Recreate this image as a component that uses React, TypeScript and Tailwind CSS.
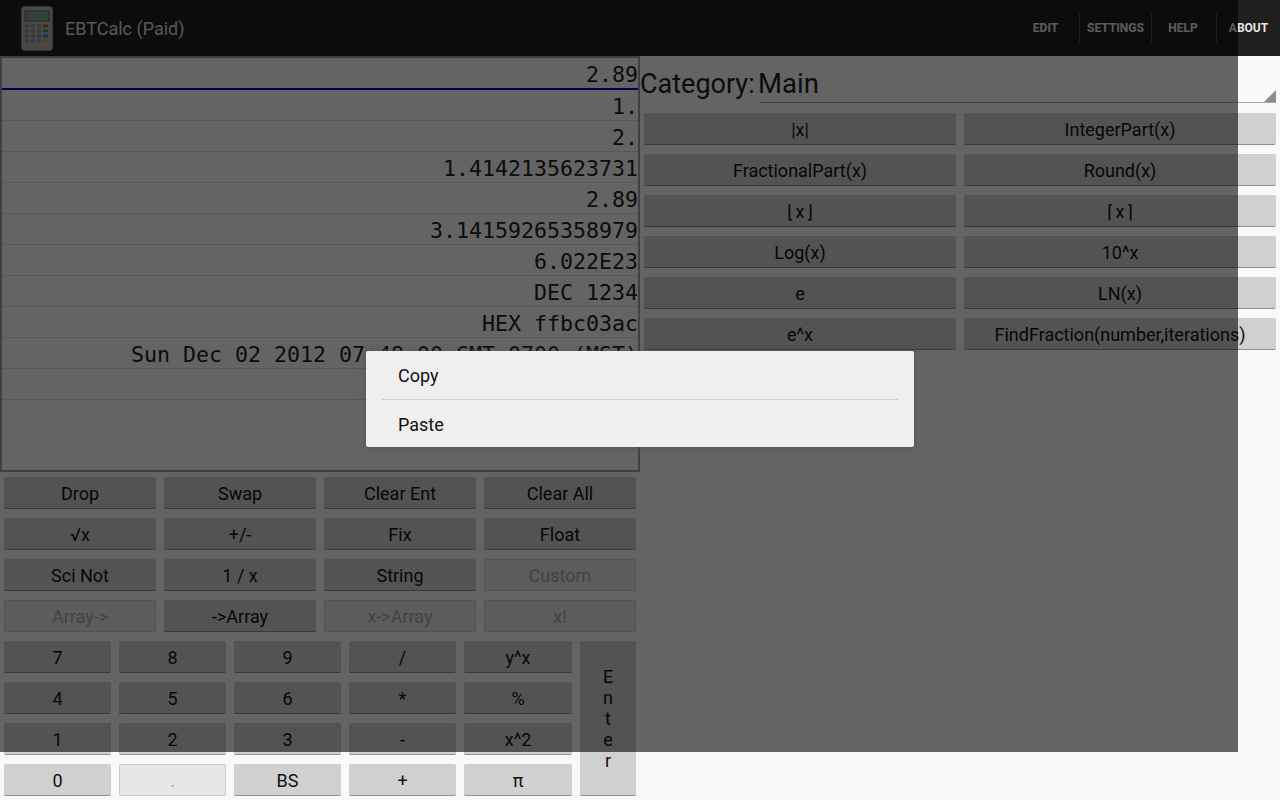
const stackRows = [
  "2.89",
  "1.",
  "2.",
  "1.4142135623731",
  "2.89",
  "3.14159265358979",
  "6.022E23",
  "DEC 1234",
  "HEX ffbc03ac",
  "Sun Dec 02 2012 07:48:00 GMT-0700 (MST)",
  "",
];

const opRows = [
  [
    { label: "Drop" },
    { label: "Swap" },
    { label: "Clear Ent" },
    { label: "Clear All" },
  ],
  [{ label: "√x" }, { label: "+/-" }, { label: "Fix" }, { label: "Float" }],
  [
    { label: "Sci Not" },
    { label: "1 / x" },
    { label: "String" },
    { label: "Custom", disabled: true },
  ],
  [
    { label: "Array->", disabled: true },
    { label: "->Array" },
    { label: "x->Array", disabled: true },
    { label: "x!", disabled: true },
  ],
];

const numRows = [
  [{ label: "7" }, { label: "8" }, { label: "9" }, { label: "/" }, { label: "y^x" }],
  [{ label: "4" }, { label: "5" }, { label: "6" }, { label: "*" }, { label: "%" }],
  [{ label: "1" }, { label: "2" }, { label: "3" }, { label: "-" }, { label: "x^2" }],
  [
    { label: "0" },
    { label: ".", disabled: true },
    { label: "BS" },
    { label: "+" },
    { label: "π" },
  ],
];

const funcRows = [
  ["|x|", "IntegerPart(x)"],
  ["FractionalPart(x)", "Round(x)"],
  ["⌊\u200ax\u200a⌋", "⌈\u200ax\u200a⌉"],
  ["Log(x)", "10^x"],
  ["e", "LN(x)"],
  ["e^x", "FindFraction(number,iterations)"],
];

function Key({
  label,
  disabled,
  className = "",
}: {
  label: string;
  disabled?: boolean;
  className?: string;
}) {
  return (
    <div
      className={
        "flex h-[32px] items-center justify-center rounded-[2px] pt-[1px] text-[18px] " +
        (disabled
          ? "border border-[#cccccc] bg-[#e6e6e6] text-[#a8a8a8] "
          : "border-b border-[#8f8f8f] bg-[#d0d0d0] text-[#111111] ") +
        className
      }
    >
      {label}
    </div>
  );
}

function CalcIcon() {
  return (
    <svg width="32" height="46" viewBox="0 0 32 46">
      <rect x="0.5" y="0.5" width="31" height="44" rx="3" fill="#b4b4b4" stroke="#8a8a8a" />
      <rect x="4" y="5" width="24" height="10" fill="#7fa58f" stroke="#55655c" />
      {[20, 25, 30, 35].map((y, i) => (
        <g key={y}>
          {[6, 12, 18].map((x) => (
            <circle key={x} cx={x} cy={y} r="1.7" fill="#9a9a9a" stroke="#777777" strokeWidth="0.6" />
          ))}
          <rect
            x="22"
            y={y - 1.5}
            width="5"
            height="3"
            rx="1"
            fill={["#d83a3a", "#2ea83a", "#3a78d8", "#e0a020"][i]}
          />
        </g>
      ))}
    </svg>
  );
}

export default function App() {
  return (
    <div className="relative h-[800px] w-[1280px] overflow-hidden bg-[#f9f9f9] font-['Roboto',sans-serif]">
      {/* action bar */}
      <div className="flex h-14 items-center bg-[#1f1f1f]">
        <div className="ml-[21px] mr-[12px] mt-[1px]">
          <CalcIcon />
        </div>
        <span className="text-[18px] text-[#dcdcdc]">EBTCalc (Paid)</span>
        <div className="ml-auto flex h-8 items-center text-[12px] font-bold text-[#e6e6e6]">
          <span className="flex h-8 w-[68px] items-center justify-center pl-[1px]">EDIT</span>
          <span className="flex h-8 w-[72px] items-center justify-center border-l border-[#444444]">
            SETTINGS
          </span>
          <span className="flex h-8 w-[65px] items-center justify-center border-l border-[#444444] pr-[2px]">
            HELP
          </span>
          <span className="flex h-8 w-[64px] items-center justify-center border-l border-[#444444]">
            ABOUT
          </span>
        </div>
      </div>

      <div className="flex">
        {/* left column */}
        <div className="w-[640px]">
          <div className="h-[416px] overflow-hidden border-2 border-[#a0a0a0]">
            {stackRows.map((row, i) => (
              <div
                key={i}
                className={
                  "flex items-center justify-end whitespace-nowrap pt-[5px] font-['DejaVu_Sans_Mono',monospace] text-[21.6px] text-[#222222] " +
                  (i === 0 ? "h-[32px] border-b-2 border-[#0000c0]" : "h-[31px] border-b border-[#dadada]")
                }
              >
                {row}
              </div>
            ))}
          </div>

          <div className="flex flex-col gap-[9px] px-1 pt-[5px]">
            {opRows.map((row, i) => (
              <div key={i} className="grid grid-cols-4 gap-2">
                {row.map((k) => (
                  <Key key={k.label} label={k.label} disabled={k.disabled} />
                ))}
              </div>
            ))}

            <div className="flex gap-2">
              <div className="flex w-[568px] flex-col gap-[9px]">
                {numRows.map((row, i) => (
                  <div key={i} className="grid grid-cols-[107px_107px_107px_107px_108px] gap-2">
                    {row.map((k) => (
                      <Key key={k.label} label={k.label} disabled={k.disabled} />
                    ))}
                  </div>
                ))}
              </div>
              <div className="flex h-[155px] w-14 flex-col items-center justify-center rounded-[2px] border-b border-[#8f8f8f] bg-[#d0d0d0] text-[18px] leading-[21px] text-[#111111]">
                <span>E</span>
                <span>n</span>
                <span>t</span>
                <span>e</span>
                <span>r</span>
              </div>
            </div>
          </div>
        </div>

        {/* right column */}
        <div className="w-[640px]">
          <div className="flex h-[48px] items-start">
            <span className="mt-[10px] w-[119px] text-[27px] leading-[36px] text-[#222222]">Category:</span>
            <div className="relative mt-[10px] h-[37px] w-[517px] border-b border-[#a8a8a8] text-[27.5px] leading-[36px] text-[#222222]">
              <span className="-ml-[1px]">Main</span>
              <div className="absolute bottom-0 right-0 h-0 w-0 border-b-[12px] border-l-[12px] border-b-[#8c8c8c] border-l-transparent" />
            </div>
          </div>
          <div className="flex flex-col gap-[9px] px-1 pt-[9px]">
            {funcRows.map((row, i) => (
              <div key={i} className="grid grid-cols-2 gap-2">
                {row.map((label) => (
                  <Key key={label} label={label} />
                ))}
              </div>
            ))}
          </div>
        </div>
      </div>

      {/* dim layer */}
      <div className="absolute left-0 top-0 h-[752px] w-[1238px] bg-black/60" />

      {/* context menu */}
      <div className="absolute left-[366px] top-[351px] h-[96px] w-[548px] rounded-[2px] bg-[#efefef] text-[18px] text-[#111111] shadow-[0_1px_6px_rgba(70,90,60,0.8)]">
        <div className="flex h-[48px] items-center pl-8">Copy</div>
        <div className="mx-4 h-px bg-[#cfcfcf]" />
        <div className="flex h-[47px] items-center pl-8 pt-[1px]">Paste</div>
      </div>
    </div>
  );
}
